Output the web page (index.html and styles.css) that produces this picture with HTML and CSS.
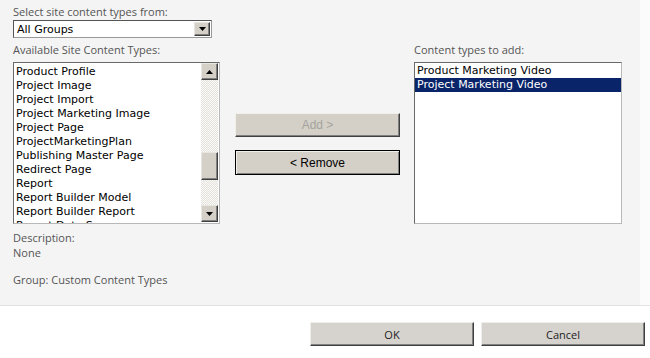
FILE: index.html
```html
<!DOCTYPE html>
<html lang="en">
<head>
  <meta charset="UTF-8">
  <title>Add Content Types</title>
  <link rel="stylesheet" href="styles.css">
</head>
<body>
  <div class="main">
    <div class="field-label">Select site content types from:</div>
    <div class="select">
      <span class="select-value">All Groups</span>
      <span class="arrow-btn select-btn">
        <svg width="7" height="4" viewBox="0 0 7 4"><path d="M0 0h7L3.5 4z" fill="#000"/></svg>
      </span>
    </div>

    <div class="picker">
      <!-- Available types -->
      <div class="column column-left">
        <div class="field-label">Available Site Content Types:</div>
        <div class="listbox">
          <ul class="items">
            <li>Product Profile</li>
            <li>Project Image</li>
            <li>Project Import</li>
            <li>Project Marketing Image</li>
            <li>Project Page</li>
            <li>ProjectMarketingPlan</li>
            <li>Publishing Master Page</li>
            <li>Redirect Page</li>
            <li>Report</li>
            <li>Report Builder Model</li>
            <li>Report Builder Report</li>
            <li>Report Data Source</li>
          </ul>
          <div class="scrollbar">
            <span class="arrow-btn">
              <svg width="7" height="4" viewBox="0 0 7 4"><path d="M0 4h7L3.5 0z" fill="#000"/></svg>
            </span>
            <div class="track"><div class="thumb"></div></div>
            <span class="arrow-btn">
              <svg width="7" height="4" viewBox="0 0 7 4"><path d="M0 0h7L3.5 4z" fill="#000"/></svg>
            </span>
          </div>
        </div>
      </div>

      <!-- Move buttons -->
      <div class="actions">
        <button class="btn btn-move btn-disabled">Add &gt;</button>
        <button class="btn btn-move btn-default">&lt; Remove</button>
      </div>

      <!-- Selected types -->
      <div class="column column-right">
        <div class="field-label">Content types to add:</div>
        <div class="listbox">
          <ul class="items items-right">
            <li>Product Marketing Video</li>
            <li class="selected">Project Marketing Video</li>
          </ul>
        </div>
      </div>
    </div>

    <div class="details">
      <div>Description:</div>
      <div>None</div>
      <div class="group">Group: Custom Content Types</div>
    </div>
  </div>

  <div class="footer">
    <button class="btn btn-footer">OK</button>
    <button class="btn btn-footer">Cancel</button>
  </div>
</body>
</html>
```

FILE: styles.css
```css
body {
  margin: 0;
  background: #fff;
  font-family: "Open Sans", sans-serif;
}
.main {
  height: 306px;
  box-sizing: border-box;
  padding: 4px 0 0 13px;
  border-bottom: 1px solid #e2e2e2;
  background: linear-gradient(to left, #fbfbfb 10px, #f4f4f4 10px);
}
.field-label {
  font-size: 11px;
  line-height: 15px;
  color: #555;
}
.select {
  display: flex;
  align-items: center;
  justify-content: space-between;
  width: 199px;
  height: 18px;
  box-sizing: border-box;
  margin-top: 1px;
  padding: 0 1px 0 3px;
  background: #fff;
  border: 1px solid #7a7a7a;
  border-color: #555 #999 #999 #555;
}
.select-value {
  font-family: "DejaVu Sans", Verdana, sans-serif;
  font-size: 11px;
  color: #000;
}
.arrow-btn {
  display: flex;
  align-items: center;
  justify-content: center;
  width: 17px;
  height: 17px;
  box-sizing: border-box;
  background: #d4d0c8;
  border: 1px solid;
  border-color: #e8e6e0 #404040 #404040 #e8e6e0;
  box-shadow: inset -1px -1px #808080;
}
.select-btn {
  width: 16px;
  height: 14px;
}
.picker {
  display: flex;
  align-items: flex-start;
  margin-top: 4px;
}
.column-left { width: 207px; }
.column-right {
  width: 208px;
  margin-left: 14px;
}
.listbox {
  display: flex;
  height: 162px;
  box-sizing: border-box;
  margin-top: 5px;
  background: #fff;
  border: 1px solid;
  border-color: #6a6a6a #b8b8b8 #b8b8b8 #6a6a6a;
  overflow: hidden;
}
.items {
  flex: 1;
  list-style: none;
  margin: 0;
  padding: 2px 0 0;
  font-family: "DejaVu Sans", Verdana, sans-serif;
  font-size: 11px;
  line-height: 14px;
  color: #000;
  white-space: nowrap;
  overflow: hidden;
}
.items-right { padding-top: 1px; }
.items li { padding-left: 2px; }
.items li.selected {
  background: #0a246a;
  color: #fff;
}
.scrollbar {
  display: flex;
  flex-direction: column;
  width: 17px;
  margin-right: 1px;
}
.track {
  height: 125px;
  background: repeating-conic-gradient(#fbfaf8 0 25%, #e4e2dc 0 50%) 0 0 / 2px 2px;
}
.thumb {
  height: 28px;
  margin-top: 72px;
  box-sizing: border-box;
  background: #d4d0c8;
  border: 1px solid;
  border-color: #e8e6e0 #404040 #404040 #e8e6e0;
  box-shadow: inset -1px -1px #808080;
}
.actions {
  display: flex;
  flex-direction: column;
  gap: 13px;
  width: 165px;
  margin-left: 15px;
  padding-top: 71px;
}
.btn {
  margin: 0;
  padding: 0;
  background: #d4d0c8;
  border: 1px solid;
  border-color: #f0efea #404040 #404040 #f0efea;
  box-shadow: inset -1px -1px #808080;
  color: #000;
}
.btn-move {
  height: 24px;
  font-family: "Liberation Sans", Arial, sans-serif;
  font-size: 12px;
}
.btn-disabled { color: #a5a39d; }
.btn-default {
  height: 25px;
  border-color: #000;
  box-shadow: inset 1px 1px #f0efea, inset -1px -1px #808080;
}
.details {
  margin-top: 6px;
  font-size: 11px;
  line-height: 15px;
  color: #555;
}
.group { margin-top: 12px; }
.footer {
  display: flex;
  justify-content: flex-end;
  gap: 7px;
  padding: 16px 5px 0 0;
}
.btn-footer {
  width: 164px;
  height: 24px;
  font-family: "Open Sans", sans-serif;
  font-size: 11px;
  color: #222;
  background: #d6d3ce;
}
```
